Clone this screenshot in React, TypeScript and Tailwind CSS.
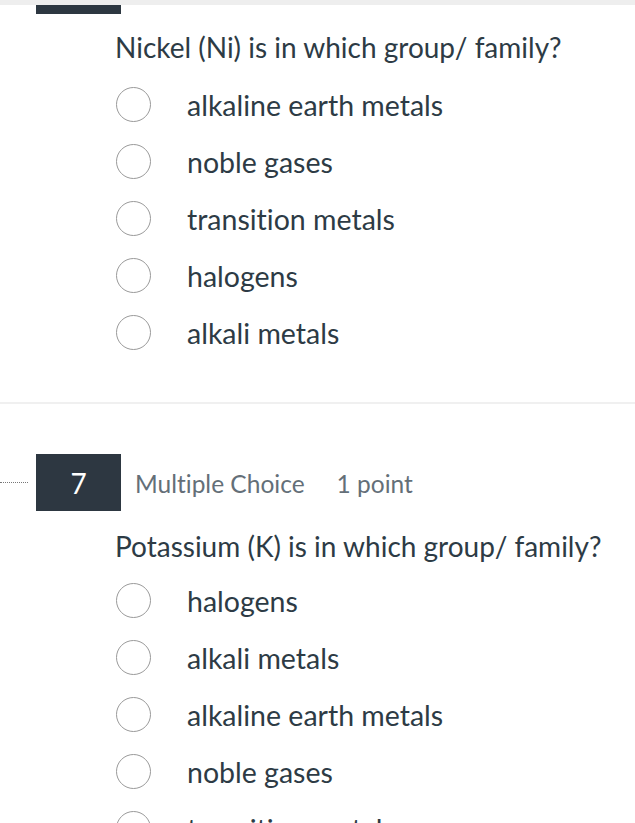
import React from "react";

type Question = {
  text: string;
  options: string[];
};

const first: Question = {
  text: "Nickel (Ni) is in which group/ family?",
  options: ["alkaline earth metals", "noble gases", "transition metals", "halogens", "alkali metals"],
};

const second: Question = {
  text: "Potassium (K) is in which group/ family?",
  options: ["halogens", "alkali metals", "alkaline earth metals", "noble gases", "transition metals"],
};

const Option: React.FC<{ label: string }> = ({ label }) => (
  <div className="flex h-[57px] items-center">
    <span className="ml-[116px] h-[35px] w-[35px] shrink-0 rounded-full border-[1.5px] border-[#9a9a9a] bg-white" />
    <span className="ml-[36px] whitespace-nowrap text-[28.5px] leading-[34px] text-[#2d3b45]">{label}</span>
  </div>
);

const App: React.FC = () => {
  return (
    <div className="h-[823px] w-[635px] overflow-hidden bg-white font-['Lato',sans-serif] [font-variant-ligatures:none]">
      {/* previous question bar */}
      <div className="h-[5px] bg-[#eeeeee]" />
      <div className="ml-[36px] h-[9px] w-[85px] bg-[#2d3741]" />

      <h2 className="mt-[16px] whitespace-nowrap pl-[115px] text-[28px] font-normal leading-[34px] text-[#2d3b45]">
        {first.text}
      </h2>
      <div className="mt-[12px]">
        {first.options.map((o) => (
          <Option key={o} label={o} />
        ))}
      </div>

      <div className="mt-[41px] h-[2px] bg-[#f0f0f0]" />

      {/* question 7 header */}
      <div className="mt-[50px] flex h-[57px] items-center">
        <div className="w-[28px] border-t border-dotted border-[#777]" />
        <div className="ml-[8px] flex h-[57px] w-[85px] items-center justify-center bg-[#2d3741] text-[28px] text-white">
          7
        </div>
        <span className="ml-[14px] pt-[4px] text-[24.5px] text-[#646f78]">Multiple Choice</span>
        <span className="ml-[32px] pt-[4px] text-[24.5px] text-[#646f78]">1 point</span>
      </div>

      <h2 className="mt-[18px] whitespace-nowrap pl-[115px] text-[28px] font-normal leading-[34px] text-[#2d3b45]">
        {second.text}
      </h2>
      <div className="mt-[9px]">
        {second.options.map((o) => (
          <Option key={o} label={o} />
        ))}
      </div>
    </div>
  );
};

export default App;
